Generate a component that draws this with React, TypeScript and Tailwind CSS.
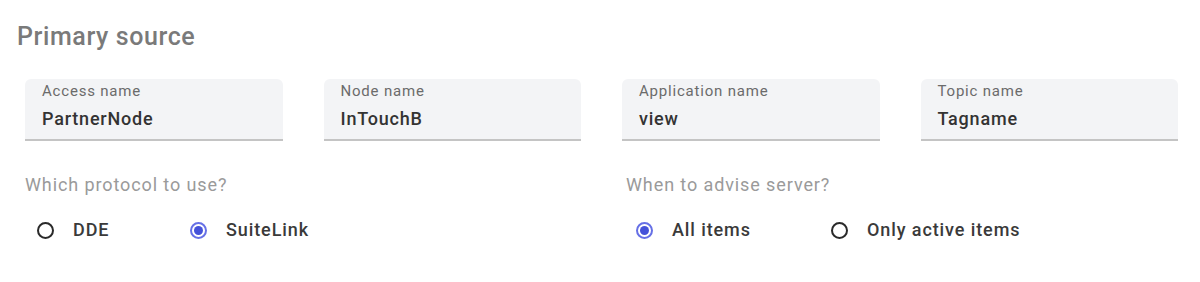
import React from "react";

function Field({ label, value }: { label: string; value: string }) {
  return (
    <div className="h-[62px] rounded-t-[6px] bg-[#f3f4f6] border-b-2 border-[#c4c4c4] pl-[17px] pt-[3px]">
      <div className="text-[15px] leading-[18px] text-[#6b6b6b] tracking-[0.8px]">{label}</div>
      <div className="text-[18px] leading-[26px] font-medium text-[#333333] mt-[6px] tracking-[0.8px]">{value}</div>
    </div>
  );
}

function Radio({ label, checked }: { label: string; checked?: boolean }) {
  return (
    <div className="flex items-center">
      {checked ? (
        <span className="w-[17px] h-[17px] rounded-full border-2 border-[#6670e6] flex items-center justify-center">
          <span className="w-[9px] h-[9px] rounded-full bg-[#4552d9]" />
        </span>
      ) : (
        <span className="w-[17px] h-[17px] rounded-full border-[2.5px] border-[#2a2a2a]" />
      )}
      <span className="ml-[19px] text-[18px] leading-[24px] font-medium text-[#3a3a3a] tracking-[0.9px]">{label}</span>
    </div>
  );
}

export default function App() {
  return (
    <div
      className="w-[1200px] h-[282px] bg-white overflow-hidden"
      style={{ fontFamily: "Roboto, 'Liberation Sans', sans-serif" }}
    >
      <div className="pl-[17px] pt-[21px] text-[25px] leading-[32px] font-medium text-[#7a7a7a] tracking-[0.6px]">
        Primary source
      </div>
      <div className="ml-[25px] mt-[26px] w-[1153px] grid grid-cols-4 gap-x-[41px]">
        <Field label="Access name" value="PartnerNode" />
        <Field label="Node name" value="InTouchB" />
        <Field label="Application name" value="view" />
        <Field label="Topic name" value="Tagname" />
      </div>
      <div className="ml-[25px] mt-[33px] w-[1153px] grid grid-cols-2 gap-x-[41px]">
        <div>
          <div className="text-[18px] leading-[22px] text-[#9a9a9a] tracking-[0.9px]">Which protocol to use?</div>
          <div className="flex mt-[22px] pl-[12px]">
            <div className="w-[153px]"><Radio label="DDE" /></div>
            <Radio label="SuiteLink" checked />
          </div>
        </div>
        <div className="pl-[4px]">
          <div className="text-[18px] leading-[22px] text-[#9a9a9a] tracking-[0.9px]">When to advise server?</div>
          <div className="flex mt-[22px] pl-[10px]">
            <div className="w-[195px]"><Radio label="All items" checked /></div>
            <Radio label="Only active items" />
          </div>
        </div>
      </div>
    </div>
  );
}
